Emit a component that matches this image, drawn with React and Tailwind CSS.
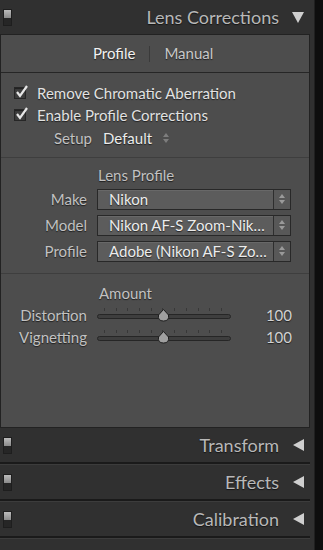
import React from 'react';

const FONT = { fontFamily: 'Lato, "Open Sans", "Liberation Sans", sans-serif' };

function Switch() {
  return (
    <div className="flex flex-col w-[9px] h-[17px] border border-[#1e1e1e]">
      <div className="h-[8px] bg-gradient-to-b from-[#bcbcbc] to-[#8a8a8a]" />
      <div className="flex-1 bg-[#262626]" />
    </div>
  );
}

function Tri({ down }) {
  return (
    <svg width="12" height="12" viewBox="0 0 12 12">
      {down ? <polygon points="0,1 12,1 6,12" fill="#cfcfcf" /> : <polygon points="1,6 12,0 12,12" fill="#cfcfcf" />}
    </svg>
  );
}

function Check() {
  return (
    <div className="relative w-[12px] h-[12px] bg-[#3e3e3e] border border-[#262626] shadow-[inset_0_1px_1px_rgba(0,0,0,0.5)]">
      <svg className="absolute -top-[3px] left-[0px]" width="14" height="14" viewBox="0 0 14 14">
        <path d="M2 7 L5 11 L12 1" stroke="#e6e6e6" strokeWidth="2.2" fill="none" />
      </svg>
    </div>
  );
}

function Stepper({ color = '#8a8a8a' }) {
  return (
    <svg width="8" height="12" viewBox="0 0 8 12">
      <polygon points="4,1 7,5 1,5" fill={color} />
      <polygon points="4,11 7,7 1,7" fill={color} />
    </svg>
  );
}

function Select({ label, value }) {
  return (
    <div className="flex items-center h-[26px]">
      <div className="w-[86px] text-right text-[#c2c2c2]">{label}</div>
      <div className="ml-[10px] flex w-[194px] h-[21px] border border-[#282828] bg-[#5c5c5c] shadow-[inset_0_1px_0_rgba(255,255,255,0.08)]">
        <div className="flex-1 pl-[11px] leading-[19px] text-[#ececec] whitespace-nowrap overflow-hidden">{value}</div>
        <div className="w-[17px] border-l border-[#2e2e2e] flex items-center justify-center bg-[#585858]">
          <Stepper color="#9a9a9a" />
        </div>
      </div>
    </div>
  );
}

function Slider({ label }) {
  return (
    <div className="flex items-center h-[22px]">
      <div className="w-[86px] text-right text-[#c2c2c2]">{label}</div>
      <div className="ml-[10px] relative w-[134px] h-[14px]">
        <div className="absolute left-[7px] w-[118px] top-[0px] flex justify-between">
          {[0, 1, 2, 3, 4, 5, 6, 7, 8, 9, 10].map(i => (
            <div key={i} className="w-px h-[3px] bg-[#383838]" />
          ))}
        </div>
        <div className="absolute left-0 right-0 top-[6px] h-[5px] rounded-full bg-[#3e3e3e] border border-[#262626]" />
        <svg className="absolute left-[60px] top-[1px]" width="13" height="13" viewBox="0 0 13 13">
          <path d="M6.5 0.5 L11.5 6 Q12.5 12 6.5 12 Q0.5 12 1.5 6 Z" fill="#a0a0a0" stroke="#1e1e1e" strokeWidth="1" />
        </svg>
      </div>
      <div className="flex-1 text-right pr-[17px] text-[#d2d2d2]">100</div>
    </div>
  );
}

function Header({ title, down }) {
  return (
    <div className="flex items-center h-[34px] pl-[3px] pr-[10px]">
      <Switch />
      <div className="flex-1 text-right text-[18px] text-[#b8b8b8] pr-[13px]">{title}</div>
      <Tri down={down} />
    </div>
  );
}

function Divider() {
  return <div className="h-[3px] mr-[4px] bg-[#1a1a1a] border-b border-[#3c3c3c]" />;
}

export default function App() {
  return (
    <div style={FONT} className="w-[323px] h-[550px] bg-[#0e0e0e] flex overflow-hidden text-[15px] [text-shadow:0_1px_1px_rgba(0,0,0,0.6)]">
      <div className="w-[315px] bg-[#303030] border-r border-[#202020] flex flex-col">
        <Header title="Lens Corrections" down />
        <div className="h-[394px] mr-[4px] bg-[#4d4d4d] border border-[#222] flex flex-col">
          <div className="h-[38px] flex items-center pl-[92px] border-b border-[#262626]">
            <span className="text-[#f2f2f2]">Profile</span>
            <span className="mx-[14px] w-px h-[16px] bg-[#3a3a3a]" />
            <span className="text-[#c8c8c8]">Manual</span>
          </div>
          <div className="flex flex-col pt-[9px] pb-[7px] border-b border-[#3e3e3e]">
            <div className="flex items-center h-[22px] pl-[13px] gap-[11px] text-[#e2e2e2]">
              <Check />
              <span>Remove Chromatic Aberration</span>
            </div>
            <div className="flex items-center h-[22px] pl-[13px] gap-[11px] text-[#e2e2e2]">
              <Check />
              <span>Enable Profile Corrections</span>
            </div>
            <div className="flex items-center h-[24px]">
              <div className="w-[91px] text-right text-[#c2c2c2]">Setup</div>
              <span className="ml-[11px] text-[#ececec]">Default</span>
              <span className="ml-[10px] opacity-80"><Stepper /></span>
            </div>
          </div>
          <div className="flex flex-col pt-[6px] pb-[9px] border-b border-[#3e3e3e]">
            <div className="pl-[97px] h-[22px] leading-[22px] text-[#c2c2c2]">Lens Profile</div>
            <Select label="Make" value="Nikon" />
            <Select label="Model" value="Nikon AF-S Zoom-Nik…" />
            <Select label="Profile" value="Adobe (Nikon AF-S Zo…" />
          </div>
          <div className="flex flex-col pt-[8px]">
            <div className="pl-[98px] h-[22px] leading-[22px] text-[#c2c2c2]">Amount</div>
            <Slider label="Distortion" />
            <Slider label="Vignetting" />
          </div>
        </div>
        <Header title="Transform" />
        <Divider />
        <Header title="Effects" />
        <Divider />
        <Header title="Calibration" />
        <Divider />
      </div>
    </div>
  );
}
